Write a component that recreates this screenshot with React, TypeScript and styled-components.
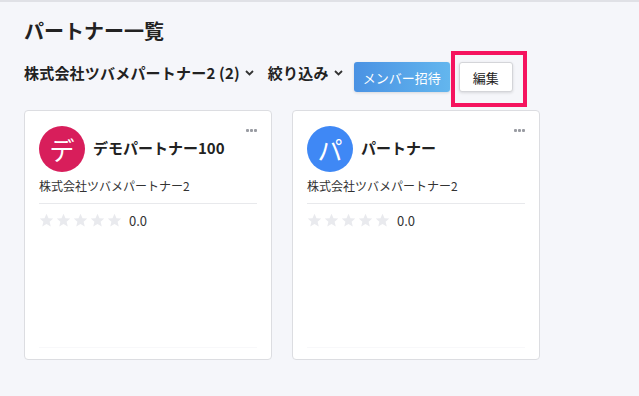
import React from 'react'
import styled, { createGlobalStyle } from 'styled-components'

const GlobalStyle = createGlobalStyle`
  html, body {
    margin: 0;
    padding: 0;
    background: #f5f6fa;
  }
  body {
    font-family: "Noto Sans CJK JP", "Noto Sans", sans-serif;
    color: #222;
  }
`

export const Page = styled.div`
  min-height: 396px;
  border-top: 2px solid #e0e1e6;
  padding: 15px 24px 0;
  box-sizing: border-box;
`

export const Title = styled.h1`
  margin: 0;
  font-size: 20px;
  line-height: 28px;
  font-weight: 700;
  color: #222;
`

export const Toolbar = styled.div`
  display: flex;
  align-items: flex-start;
  margin-top: 17px;
  height: 30px;
`

export const Dropdown = styled.div<{ $gap?: number }>`
  display: flex;
  align-items: center;
  gap: 5px;
  font-size: 15px;
  font-weight: 700;
  line-height: 22px;
  letter-spacing: 0.2px;
  white-space: pre;
  color: #222;
  margin-right: ${(p) => p.$gap ?? 0}px;
  cursor: pointer;
`

export const PrimaryButton = styled.button`
  width: 96px;
  height: 30px;
  border: none;
  border-radius: 3px;
  background: linear-gradient(90deg, #4a92e3 0%, #63b6ee 100%);
  color: #fff;
  font-family: inherit;
  font-size: 13px;
  padding: 0;
  margin-right: 9px;
  box-shadow: 0 1px 3px rgba(0, 0, 0, 0.12);
`

export const EditWrap = styled.div`
  position: relative;
`

export const EditButton = styled.button`
  width: 54px;
  height: 30px;
  border: 1px solid #d4d5d9;
  border-radius: 3px;
  background: #fff;
  color: #222;
  font-family: inherit;
  font-size: 13px;
  padding: 0;
  box-shadow: 0 1px 3px rgba(0, 0, 0, 0.12);
`

export const Highlight = styled.div`
  position: absolute;
  left: -8px;
  top: -11px;
  width: 76px;
  height: 56px;
  border: 4px solid #f5145f;
  box-sizing: border-box;
  pointer-events: none;
`

export const Grid = styled.div`
  display: grid;
  grid-template-columns: 248px 248px;
  gap: 20px;
  margin-top: 18px;
`

export const Card = styled.div`
  position: relative;
  height: 250px;
  background: #fff;
  border: 1px solid #dcdde1;
  border-radius: 4px;
  box-sizing: border-box;
  padding: 15px 14px 0;
  display: flex;
  flex-direction: column;
`

export const Menu = styled.div`
  position: absolute;
  right: 14px;
  top: 18px;
  display: flex;
  gap: 1px;
  span {
    width: 3px;
    height: 3px;
    border-radius: 1px;
    background: #9a9ca3;
  }
`

export const Head = styled.div`
  display: flex;
  align-items: center;
  gap: 8px;
`

export const Avatar = styled.div<{ $color: string }>`
  width: 46px;
  height: 46px;
  border-radius: 50%;
  background: ${(p) => p.$color};
  color: #fff;
  display: flex;
  align-items: center;
  justify-content: center;
  font-size: 25px;
  flex-shrink: 0;
`

export const Name = styled.div`
  font-size: 15px;
  font-weight: 700;
  color: #222;
  margin-top: -4px;
`

export const Company = styled.div`
  margin-top: 6px;
  font-size: 12px;
  line-height: 16px;
  color: #333;
  padding-bottom: 9px;
  border-bottom: 1px solid #e8e9ec;
`

export const Rating = styled.div`
  display: flex;
  align-items: center;
  gap: 2px;
  margin-top: 7px;
  font-size: 13px;
  color: #333;
  span {
    margin-left: 5px;
  }
`

export const Footer = styled.div`
  margin-top: auto;
  margin-bottom: 11px;
  border-bottom: 1px solid #f8f8fa;
`

const Chevron = () => (
  <svg width="9" height="6" viewBox="0 0 9 6">
    <path d="M1 1l3.5 3.5L8 1" fill="none" stroke="#333" strokeWidth="1.8" />
  </svg>
)

const Star = () => (
  <svg width="15" height="15" viewBox="0 0 24 24">
    <path
      d="M12 1.2l3.2 7 7.6.7-5.8 5.1 1.8 7.6L12 17.6l-6.8 4 1.8-7.6-5.8-5.1 7.6-.7z"
      fill="#e9eaee"
    />
  </svg>
)

const partners = [
  { initial: 'デ', color: '#d81e5b', name: 'デモパートナー100', company: '株式会社ツバメパートナー2' },
  { initial: 'パ', color: '#3f88f5', name: 'パートナー', company: '株式会社ツバメパートナー2' },
]

export default function App() {
  return (
    <Page>
      <GlobalStyle />
      <Title>パートナー一覧</Title>
      <Toolbar>
        <Dropdown $gap={14}>
          <span>株式会社ツバメパートナー2 (2)</span>
          <Chevron />
        </Dropdown>
        <Dropdown $gap={11}>
          <span>絞り込み</span>
          <Chevron />
        </Dropdown>
        <PrimaryButton>メンバー招待</PrimaryButton>
        <EditWrap>
          <EditButton>編集</EditButton>
          <Highlight />
        </EditWrap>
      </Toolbar>
      <Grid>
        {partners.map((p) => (
          <Card key={p.name}>
            <Menu>
              <span />
              <span />
              <span />
            </Menu>
            <Head>
              <Avatar $color={p.color}>{p.initial}</Avatar>
              <Name>{p.name}</Name>
            </Head>
            <Company>{p.company}</Company>
            <Rating>
              <Star />
              <Star />
              <Star />
              <Star />
              <Star />
              <span>0.0</span>
            </Rating>
            <Footer />
          </Card>
        ))}
      </Grid>
    </Page>
  )
}
